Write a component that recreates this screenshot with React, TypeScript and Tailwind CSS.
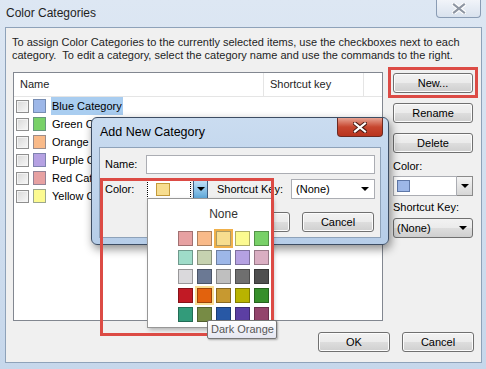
import React from "react";

const LIST = [
  { name: "Blue Category", color: "#9db7e8", selected: true },
  { name: "Green Category", color: "#78d168" },
  { name: "Orange Category", color: "#f9ba89" },
  { name: "Purple Category", color: "#b5a1e2" },
  { name: "Red Category", color: "#e7a1a2" },
  { name: "Yellow Category", color: "#fcfa90" },
];

const SWATCHES = [
  ["#e7a1a2", "#f9ba89", "#f7dd8f", "#fcfa90", "#78d168"],
  ["#9fdcc9", "#c6d2b0", "#9db7e8", "#b5a1e2", "#daaec2"],
  ["#dad9dc", "#6b7994", "#bfbfbf", "#6f6f6f", "#4f4f4f"],
  ["#c11a25", "#e2620d", "#c79930", "#b9b300", "#368f2b"],
  ["#329b7a", "#778b45", "#2858a5", "#5c3fa3", "#93446b"],
];

function Button({ label, className = "" }: { label: string; className?: string }) {
  return (
    <div
      className={`flex h-[20px] items-center justify-center rounded-[3px] border border-[#707070] bg-[linear-gradient(#f2f2f2_0%,#ebebeb_48%,#dddddd_52%,#cfcfcf_100%)] shadow-[inset_0_0_0_1px_#fcfcfc] ${className}`}
    >
      {label}
    </div>
  );
}

function Arrow() {
  return <span className="h-0 w-0 border-x-[4px] border-t-[4px] border-x-transparent border-t-black" />;
}

function CloseX({ color, outline }: { color: string; outline: string }) {
  return (
    <svg width="14" height="11" viewBox="0 0 14 11">
      <path d="M2 1.5 L12 9.5 M12 1.5 L2 9.5" stroke={outline} strokeWidth="4.2" strokeLinecap="square" />
      <path d="M2 1.5 L12 9.5 M12 1.5 L2 9.5" stroke={color} strokeWidth="2.2" strokeLinecap="square" />
    </svg>
  );
}

export default function App() {
  return (
    <div className="relative h-[369px] w-[486px] overflow-hidden bg-[linear-gradient(#dde7f3,#c6d7eb)] font-['Liberation_Sans',Arial,sans-serif] text-[11px] leading-[13px] text-black">
      {/* title bar */}
      <div className="flex h-[27px] items-center pl-[6px] text-[12px] text-[#1e1e1e]">Color Categories</div>
      <div className="absolute left-[436px] top-0 flex h-[18px] w-[45px] items-center justify-center rounded-b-[4px] border border-t-0 border-[#8a9cb4] bg-[linear-gradient(#f1f4f9,#d9e2ee)]">
        <CloseX color="#8e96a3" outline="#ffffff" />
      </div>

      {/* main panel */}
      <div className="ml-[5px] flex h-[336px] w-[477px] flex-col border border-[#8ea2b9] bg-[#f0f0f0]">
        <p className="whitespace-pre-line px-[6px] pt-[8px] text-[#1e1e1e]">
          {"To assign Color Categories to the currently selected items, use the checkboxes next to each\ncategory.\u00a0 To edit a category, select the category name and use the commands to the right."}
        </p>

        <div className="mt-[10px] flex gap-[10px] pl-[7px]">
          <div className="h-[249px] w-[370px] border border-[#828790] bg-white">
            <div className="flex h-[24px] border-b border-[#e5e5e5] text-[#1e1e1e]">
              <div className="flex w-[250px] items-center border-r border-[#e5e5e5] pl-[6px]">Name</div>
              <div className="flex w-[100px] items-center border-r border-[#e5e5e5] pl-[6px]">Shortcut key</div>
            </div>
            {LIST.map((item) => (
              <div key={item.name} className="flex h-[18px] items-center pl-[2px]">
                <span className="h-[13px] w-[13px] shrink-0 border border-[#8f8f8f] bg-[linear-gradient(135deg,#d8d8d8,#f8f8f8)] shadow-[inset_0_0_0_1px_#f4f4f4]" />
                <span className="ml-[4px] h-[14px] w-[13px] shrink-0 border border-[#5b6f8e]/60" style={{ backgroundColor: item.color }} />
                <span className={`ml-[5px] flex h-[18px] items-center whitespace-nowrap px-[1px] ${item.selected ? "bg-[#a9cdf0]" : ""}`}>
                  {item.name}
                </span>
              </div>
            ))}
          </div>

          <div className="flex w-[80px] flex-col">
            <Button label="New..." className="mt-[1px]" />
            <Button label="Rename" className="mt-[10px]" />
            <Button label="Delete" className="mt-[10px]" />
            <div className="mt-[7px]">Color:</div>
            <div className="mt-[3px] flex h-[20px]">
              <div className="flex flex-1 items-center border border-[#abadb3] bg-white pl-[3px]">
                <span className="h-[12px] w-[13px] border border-[#5f78a8] bg-[#9db7e8]" />
              </div>
              <div className="flex w-[16px] items-center justify-center border border-l-0 border-[#8a8a8a] bg-[linear-gradient(#f4f4f4,#d6d6d6)]">
                <Arrow />
              </div>
            </div>
            <div className="mt-[5px]">Shortcut Key:</div>
            <div className="mt-[4px] flex h-[20px] items-center justify-between rounded-[3px] border border-[#707070] bg-[linear-gradient(#f2f2f2_0%,#ebebeb_48%,#dddddd_52%,#cfcfcf_100%)] pl-[3px] pr-[5px]">
              <span>(None)</span>
              <Arrow />
            </div>
          </div>
        </div>

        <div className="mt-[11px] flex justify-end gap-[12px] pr-[7px]">
          <Button label="OK" className="w-[72px]" />
          <Button label="Cancel" className="w-[72px]" />
        </div>
      </div>

      {/* Add New Category dialog */}
      <div className="absolute left-[91px] top-[117px] flex h-[128px] w-[298px] flex-col rounded-[6px] border border-[#3d4d63] bg-[linear-gradient(#cadcf0,#b6cde8)] shadow-[2px_4px_10px_rgba(0,0,0,0.45)]">
        <div className="flex h-[29px] items-center pl-[8px] text-[12.5px] text-black">Add New Category</div>
        <div className="absolute right-[5px] top-0 flex h-[19px] w-[46px] items-center justify-center rounded-b-[4px] border border-t-0 border-[#6b2a22] bg-[linear-gradient(#e8a493,#c7462f_50%,#b8341e)]">
          <CloseX color="#ffffff" outline="#4a1a12" />
        </div>
        <div className="mx-[7px] h-[91px] border border-[#8ea2b9] bg-[#f0f0f0] px-[5px] pt-[7px]">
          <div className="flex items-center">
            <span className="w-[41px]">Name:</span>
            <span className="h-[19px] w-[229px] border border-[#abadb3] bg-white" />
          </div>
          <div className="mt-[5px] flex items-center">
            <span className="w-[42px]">Color:</span>
            <span className="flex h-[19px] w-[44px] items-center border border-dotted border-black bg-white pl-[8px]">
              <span className="h-[13px] w-[14px] border border-[#c39a3a] bg-[#f7dd8f]" />
            </span>
            <span className="ml-[2px] flex h-[19px] w-[15px] items-center justify-center border border-[#3c5a7e] bg-[linear-gradient(#bfe0f6,#5fa8d9)]">
              <Arrow />
            </span>
            <span className="ml-[9px]">Shortcut Key:</span>
            <span className="ml-[8px] flex h-[20px] flex-1 items-center justify-between border border-[#abadb3] bg-white pl-[4px] pr-[5px]">
              <span>(None)</span>
              <Arrow />
            </span>
          </div>
          <div className="mt-[13px] flex justify-end gap-[12px] pr-[1px]">
            <Button label="OK" className="h-[19px] w-[72px]" />
            <Button label="Cancel" className="h-[19px] w-[72px]" />
          </div>
        </div>
      </div>

      {/* colour drop-down */}
      <div className="absolute left-[147px] top-[198px] h-[130px] w-[125px] border border-[#979797] bg-white pl-[28px] shadow-[2px_2px_4px_rgba(0,0,0,0.25)]">
        <div className="mt-[9px] text-center text-[12px] text-[#333]">None</div>
        <div className="mt-[8px] grid grid-cols-[repeat(5,19px)]">
          {SWATCHES.flat().map((c, i) => (
            <div
              key={i}
              className={`flex h-[19px] w-[19px] items-center justify-center ${
                i === 2
                  ? "border-2 border-[#f0b04a] bg-[#fde9b8]"
                  : i === 16
                  ? "border-2 border-[#fbdf94] bg-[#fff3cf]"
                  : ""
              }`}
            >
              <span className="h-[15px] w-[15px] border border-black/30" style={{ backgroundColor: c }} />
            </div>
          ))}
        </div>
      </div>

      {/* annotations */}
      <div className="absolute left-[388px] top-[67px] h-[31px] w-[90px] border-[3px] border-[#dc4b45]" />
      <div className="absolute left-[100px] top-[178px] h-[158px] w-[174px] border-[3px] border-[#dc4b45]" />

      {/* tooltip */}
      <div className="absolute left-[207px] top-[320px] flex h-[19px] w-[70px] items-center rounded-[2px] border border-[#767676] bg-[linear-gradient(#ffffff,#e4e5f0)] pl-[3px] text-[#575757] shadow-[1px_1px_2px_rgba(0,0,0,0.3)]">
        Dark Orange
      </div>
    </div>
  );
}
